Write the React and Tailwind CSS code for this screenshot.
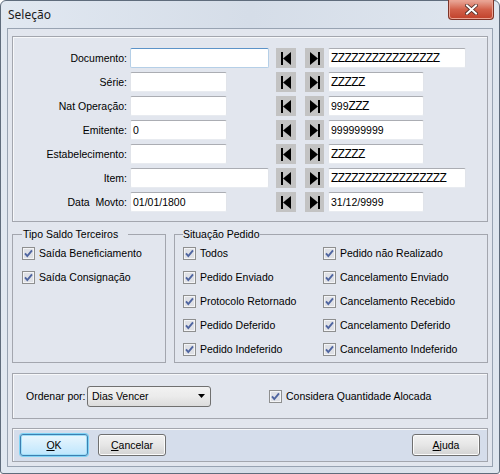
import React from 'react';

const ui = "font-['Liberation_Sans',Arial,sans-serif] text-[10.5px] leading-[13px] text-black";

const rows = [
  { label: 'Documento:', left: '', wide: true, focus: true, right: 'ZZZZZZZZZZZZZZZZ', rightWide: true },
  { label: 'Série:', left: '', right: 'ZZZZZ' },
  { label: 'Nat Operação:', left: '', right: '999ZZZ' },
  { label: 'Emitente:', left: '0', right: '999999999' },
  { label: 'Estabelecimento:', left: '', right: 'ZZZZZ' },
  { label: 'Item:', left: '', wide: true, right: 'ZZZZZZZZZZZZZZZZZ', rightWide: true },
  { label: 'Data  Movto:', left: '01/01/1800', right: '31/12/9999' },
];

// Z runs are drawn by the original font as a joined hatch; tighten them so they touch
function FieldText({ value }) {
  const parts = value.split(/(Z+)/).filter(Boolean);
  return (
    <>
      {parts.map((p, i) =>
        p[0] === 'Z' ? (
          <span key={i} className="text-[12px] tracking-[-0.55px]">{p}</span>
        ) : (
          <span key={i}>{p}</span>
        )
      )}
    </>
  );
}

function TextBox({ value, className, focus }) {
  return (
    <div
      className={`flex h-[20px] items-center rounded-[2px] border bg-white pl-[2px] ${
        focus
          ? 'border-[#b5cfe7] border-t-[#5c93c8]'
          : 'border-[#e1e4ea] border-t-[#abadb3] border-b-[#e8ebf0]'
      } ${className}`}
    >
      <FieldText value={value} />
    </div>
  );
}

function NavButton({ dir }) {
  return (
    <div className={`flex h-[20px] items-center justify-center bg-[#c3c3c3] ${dir === 'first' ? 'w-[20px]' : 'w-[19px]'}`}>
      <svg width="10" height="13" viewBox="0 0 10 13">
        {dir === 'first' ? (
          <>
            <rect x="0" y="0" width="2" height="13" fill="#000" />
            <polygon points="2,6.5 10,0 10,13" fill="#000" />
          </>
        ) : (
          <>
            <polygon points="0,0 8,6.5 0,13" fill="#000" />
            <rect x="8" y="0" width="2" height="13" fill="#000" />
          </>
        )}
      </svg>
    </div>
  );
}

function CheckBox() {
  return (
    <svg width="13" height="13" viewBox="0 0 13 13" className="shrink-0">
      <rect x="0.5" y="0.5" width="12" height="12" fill="#f3f4f6" stroke="#8e8f8f" />
      <rect x="2" y="2" width="9" height="9" fill="#dfe1e6" />
      <path d="M3 6.3 L5.3 9 L10 3.3" stroke="#4f65a0" strokeWidth="1.9" fill="none" />
    </svg>
  );
}

function Check({ label }) {
  return (
    <div className="flex h-[24px] items-center gap-[4px] whitespace-nowrap">
      <CheckBox />
      <span>{label}</span>
    </div>
  );
}

function Panel({ className, children }) {
  return (
    <div className={`border border-[#a3a6ae] shadow-[inset_1px_1px_0_#f7f8fa] ${className}`}>{children}</div>
  );
}

function WinButton({ children, primary }) {
  return (
    <button
      className={`flex h-[22px] w-[68px] items-center justify-center rounded-[3px] border ${
        primary
          ? 'border-[#3c7fb1] bg-gradient-to-b from-[#eaf6fd] to-[#bee6fd] shadow-[0_0_0_1px_#7fd3f5,inset_0_0_0_1px_#9fdff8]'
          : 'border-[#707070] bg-gradient-to-b from-[#f2f2f2] via-[#e6e6e6] to-[#d3d3d3] shadow-[inset_0_0_0_1px_#fbfbfb]'
      }`}
    >
      {children}
    </button>
  );
}

export default function App() {
  return (
    <div className={`h-[474px] w-[500px] ${ui}`}>
      <div className="flex h-full w-full flex-col rounded-t-[6px] rounded-b-[3px] border border-[#5f6c7c] bg-gradient-to-r from-[#e1e8f1] via-[#d5dde8] to-[#dfe6ef]">
        {/* Title bar */}
        <div className="flex h-[27px] shrink-0 items-start justify-between">
          <span className="pl-[7px] pt-[6px] font-['Noto_Sans',sans-serif] text-[12px] leading-[16px] text-[#1b1b1b]">
            Seleção
          </span>
          <div className="-mt-px mr-[5px] flex h-[20px] w-[46px] items-center justify-center rounded-b-[4px] border border-t-0 border-[#7d3428] bg-gradient-to-b from-[#e9ab9d] via-[#d2604a] to-[#c0402a] shadow-[inset_0_0_0_1px_#eba393]">
            <svg width="13" height="11" viewBox="0 0 13 11">
              <path d="M2 1.5 L11 9.5 M11 1.5 L2 9.5" stroke="#4b2a25" strokeWidth="3.6" strokeLinecap="square" />
              <path d="M2 1.5 L11 9.5 M11 1.5 L2 9.5" stroke="#fff" strokeWidth="2" strokeLinecap="square" />
            </svg>
          </div>
        </div>

        {/* Client area */}
        <div className="mx-[6px] mb-[6px] flex flex-1 flex-col border border-[#98a3b2] bg-[#e2e6ee] px-[4px] pt-[7px]">
          {/* Fields */}
          <Panel className="flex h-[186px] flex-col gap-[4px] pt-[11px]">
            {rows.map((r) => (
              <div key={r.label} className="flex h-[20px] items-center">
                <span className="w-[114px] whitespace-pre text-right">{r.label}</span>
                <div className="ml-[3px] w-[146px]">
                  <TextBox value={r.left} focus={r.focus} className={r.wide ? 'w-[139px]' : 'w-[97px]'} />
                </div>
                <NavButton dir="first" />
                <div className="ml-[9px]">
                  <NavButton dir="last" />
                </div>
                <TextBox value={r.right} className={`ml-[4px] ${r.rightWide ? 'w-[138px]' : 'w-[96px]'}`} />
              </div>
            ))}
          </Panel>

          {/* Group boxes */}
          <div className="mt-[6px] flex gap-[8px]">
            <fieldset className="h-[135px] w-[154px] border border-[#a3a6ae] pl-[9px]">
              <legend className="pl-[1px] pr-[10px] leading-[13px]">Tipo Saldo Terceiros</legend>
              <Check label="Saída Beneficiamento" />
              <Check label="Saída Consignação" />
            </fieldset>
            <fieldset className="h-[135px] flex-1 border border-[#a3a6ae] pl-[8px]">
              <legend className="pr-[1px] leading-[13px]">Situação Pedido</legend>
              <div className="grid grid-cols-[140px_1fr]">
                <Check label="Todos" />
                <Check label="Pedido não Realizado" />
                <Check label="Pedido Enviado" />
                <Check label="Cancelamento Enviado" />
                <Check label="Protocolo Retornado" />
                <Check label="Cancelamento Recebido" />
                <Check label="Pedido Deferido" />
                <Check label="Cancelamento Deferido" />
                <Check label="Pedido Indeferido" />
                <Check label="Cancelamento Indeferido" />
              </div>
            </fieldset>
          </div>

          {/* Ordenar */}
          <Panel className="mt-[10px] flex h-[46px] items-center pl-[13px]">
            <span className="w-[61px] whitespace-nowrap">Ordenar por:</span>
            <div className="flex h-[21px] w-[124px] items-center justify-between rounded-[3px] border border-[#707070] bg-gradient-to-b from-[#f2f2f2] via-[#ebebeb] to-[#dcdcdc] pl-[4px] pr-[5px]">
              <span>Dias Vencer</span>
              <svg width="7" height="4" viewBox="0 0 7 4">
                <polygon points="0,0 7,0 3.5,4" fill="#000" />
              </svg>
            </div>
            <div className="ml-[58px] flex items-center gap-[4px]">
              <CheckBox />
              <span>Considera Quantidade Alocada</span>
            </div>
          </Panel>

          {/* Buttons */}
          <Panel className="mt-[9px] flex h-[34px] items-center justify-between bg-[#d5ddeb] px-[7px]">
            <div className="flex gap-[10px]">
              <WinButton primary>
                <span><u>O</u>K</span>
              </WinButton>
              <WinButton>
                <span><u>C</u>ancelar</span>
              </WinButton>
            </div>
            <WinButton>
              <span><u>A</u>juda</span>
            </WinButton>
          </Panel>
        </div>
      </div>
    </div>
  );
}
